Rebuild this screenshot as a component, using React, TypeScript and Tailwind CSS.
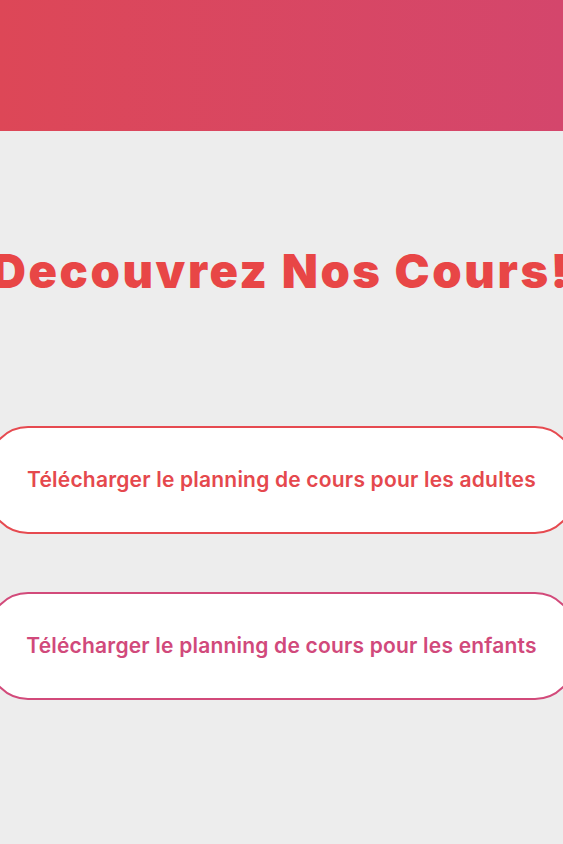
import React from 'react';

export default function App() {
  return (
    <div className="min-h-[844px] w-full overflow-hidden bg-[#ededed]" style={{ fontFamily: 'Inter, "Noto Sans", sans-serif' }}>
      {/* Header band */}
      <div className="h-[131px] w-full bg-gradient-to-r from-[#dd4757] to-[#d4466c]" />

      {/* Title */}
      <div className="mx-[-40px] mt-[116px] flex justify-center">
        <h1 className="whitespace-nowrap text-[47px] font-black leading-none tracking-[2.6px] text-[#e84646]">
          Decouvrez Nos Cours!
        </h1>
      </div>

      {/* Download buttons */}
      <div className="mx-[-12px] mt-[132px] flex flex-col gap-[58px]">
        <a className="flex h-[108px] items-center justify-center rounded-[40px] border-2 border-[#e64a50] bg-white text-[21px] font-semibold tracking-[0.2px] text-[#e5484d]">
          Télécharger le planning de cours pour les adultes
        </a>
        <a className="flex h-[108px] items-center justify-center rounded-[40px] border-2 border-[#d24a7a] bg-white text-[21px] font-semibold tracking-[0.2px] text-[#d1497b]">
          Télécharger le planning de cours pour les enfants
        </a>
      </div>
    </div>
  );
}
